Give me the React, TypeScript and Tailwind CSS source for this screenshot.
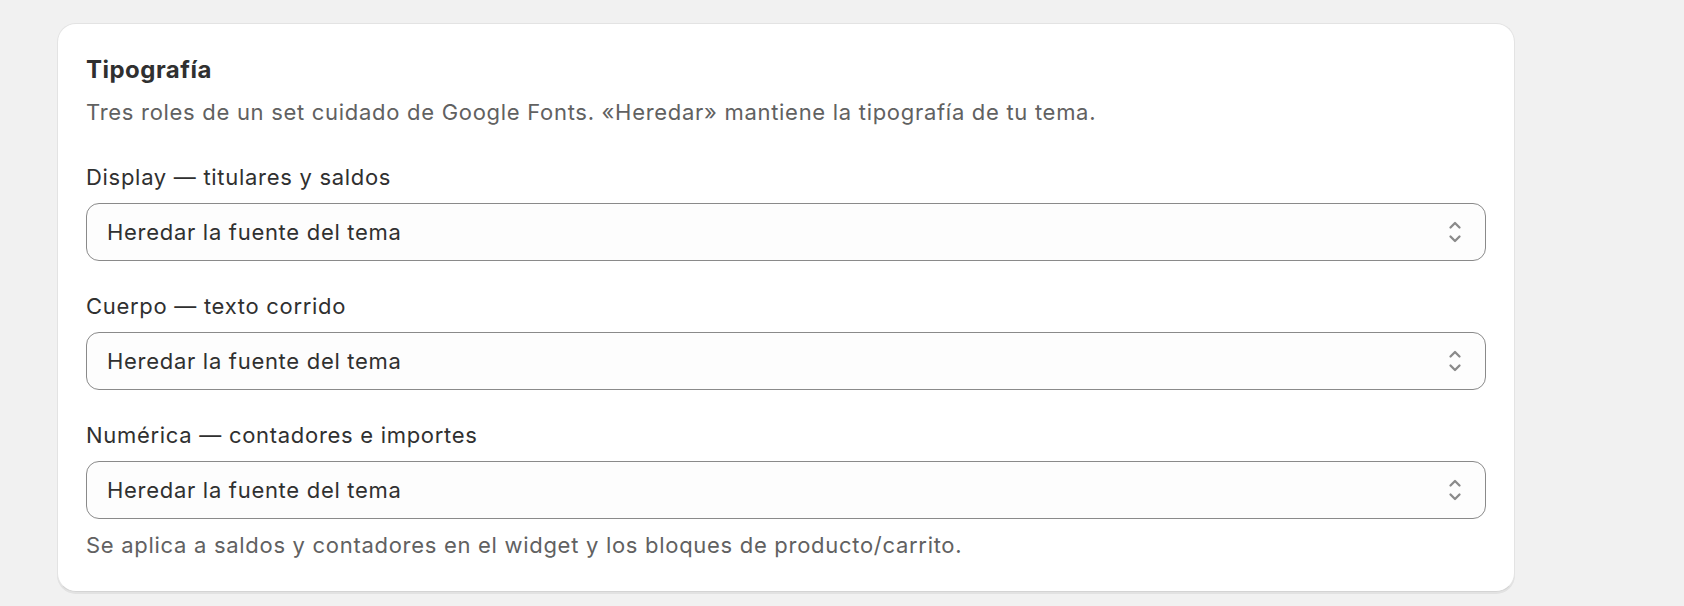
import React from "react";

interface FontRole {
  id: string;
  label: string;
  value: string;
  help?: string;
}

const roles: FontRole[] = [
  { id: "display", label: "Display — titulares y saldos", value: "inherit" },
  { id: "body", label: "Cuerpo — texto corrido", value: "inherit" },
  {
    id: "numeric",
    label: "Numérica — contadores e importes",
    value: "inherit",
    help: "Se aplica a saldos y contadores en el widget y los bloques de producto/carrito.",
  },
];

const SelectIcon: React.FC = () => (
  <svg width="14" height="24" viewBox="0 0 14 24" fill="none" aria-hidden="true">
    <path
      d="M2.5 7.5 7 3l4.5 4.5"
      stroke="#8a8a8a"
      strokeWidth="2.3"
      strokeLinecap="round"
      strokeLinejoin="round"
    />
    <path
      d="M2.5 16.5 7 21l4.5-4.5"
      stroke="#8a8a8a"
      strokeWidth="2.3"
      strokeLinecap="round"
      strokeLinejoin="round"
    />
  </svg>
);

const FontSelect: React.FC<{ role: FontRole }> = ({ role }) => (
  <div className="flex flex-col">
    <label
      htmlFor={role.id}
      className="text-[22px] leading-[32px] tracking-[0.032em] text-[#303030]"
    >
      {role.label}
    </label>
    <div className="relative mt-[10px] h-[58px] rounded-[13px] border border-[#8a8a8a] bg-[#fdfdfd]">
      <div className="flex h-full items-center justify-between pl-[20px] pr-[23px]">
        <span className="text-[22px] leading-[32px] tracking-[0.032em] text-[#303030]">
          Heredar la fuente del tema
        </span>
        <SelectIcon />
      </div>
      <select
        id={role.id}
        defaultValue={role.value}
        className="absolute inset-0 h-full w-full cursor-pointer opacity-0"
      >
        <option value="inherit">Heredar la fuente del tema</option>
      </select>
    </div>
    {role.help && (
      <p className="mt-[10px] text-[22px] leading-[32px] tracking-[0.032em] text-[#616161]">
        {role.help}
      </p>
    )}
  </div>
);

export default function App() {
  return (
    <div className="min-h-screen bg-[#f1f1f1] pt-[23px] font-['Inter',sans-serif] antialiased">
      <div className="ml-[57px] w-[1458px] rounded-[19px] border border-[#e3e3e3] border-b-[#d4d4d4] bg-white px-[28px] pt-[30px] pb-[30px] shadow-[0_2px_0_0_rgba(26,26,26,0.07)]">
        <h2 className="text-[24px] font-bold leading-[32px] tracking-[0.02em] text-[#303030]">
          Tipografía
        </h2>
        <p className="mt-[10px] text-[22px] leading-[32px] tracking-[0.032em] text-[#616161]">
          Tres roles de un set cuidado de Google Fonts. «Heredar» mantiene la
          tipografía de tu tema.
        </p>
        <div className="mt-[33px] flex flex-col gap-[29px]">
          {roles.map((role) => (
            <FontSelect key={role.id} role={role} />
          ))}
        </div>
      </div>
    </div>
  );
}
